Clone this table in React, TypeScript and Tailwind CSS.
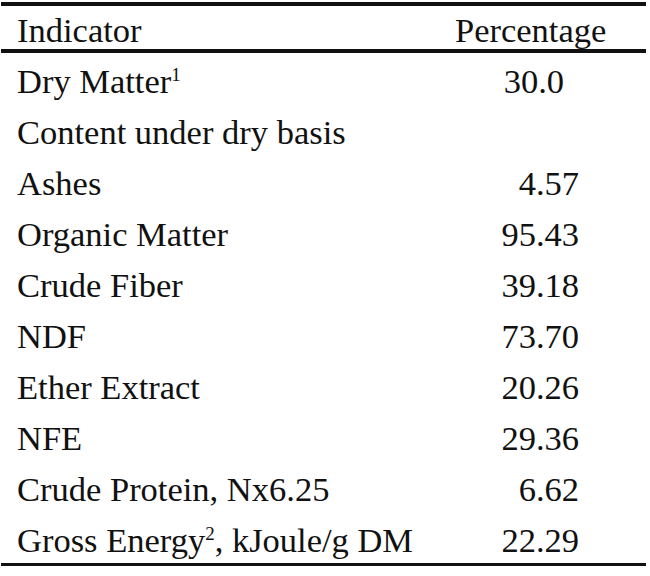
const ROWS: { label: React.ReactNode; value: string; pad?: boolean }[] = [
  { label: <>Dry Matter<Sup>1</Sup></>, value: "30.0", pad: true },
  { label: "Content under dry basis", value: "" },
  { label: "Ashes", value: "4.57" },
  { label: "Organic Matter", value: "95.43" },
  { label: "Crude Fiber", value: "39.18" },
  { label: "NDF", value: "73.70" },
  { label: "Ether Extract", value: "20.26" },
  { label: "NFE", value: "29.36" },
  { label: "Crude Protein, Nx6.25", value: "6.62" },
  { label: <>Gross Energy<Sup>2</Sup>, kJoule/g DM</>, value: "22.29" },
];

function Sup({ children }: { children: React.ReactNode }) {
  return <span className="relative top-[-12px] text-[19px] leading-none">{children}</span>;
}

export default function App() {
  return (
    <div
      className="w-[650px] h-[576px] bg-white text-[#111] pt-[2px] px-px"
      style={{ fontFamily: '"Liberation Serif", "Times New Roman", serif' }}
    >
      <div className="w-[645px] border-t-4 border-b-[3px] border-[#111]">
        <div className="flex h-[47px] items-center pt-[5px] border-b-4 border-[#111] text-[34.5px] leading-none">
          <div className="flex-1 pl-[16px]">Indicator</div>
          <div className="w-[191px]">Percentage</div>
        </div>
        {ROWS.map((r, i) => (
          <div key={i} className="flex h-[51px] items-center pt-[5px] text-[34.5px] leading-none">
            <div className="flex-1 pl-[16px] whitespace-nowrap">{r.label}</div>
            <div className={`w-[180px] text-right ${r.pad ? "pr-[82px]" : "pr-[67px]"}`}>{r.value}</div>
          </div>
        ))}
      </div>
    </div>
  );
}
